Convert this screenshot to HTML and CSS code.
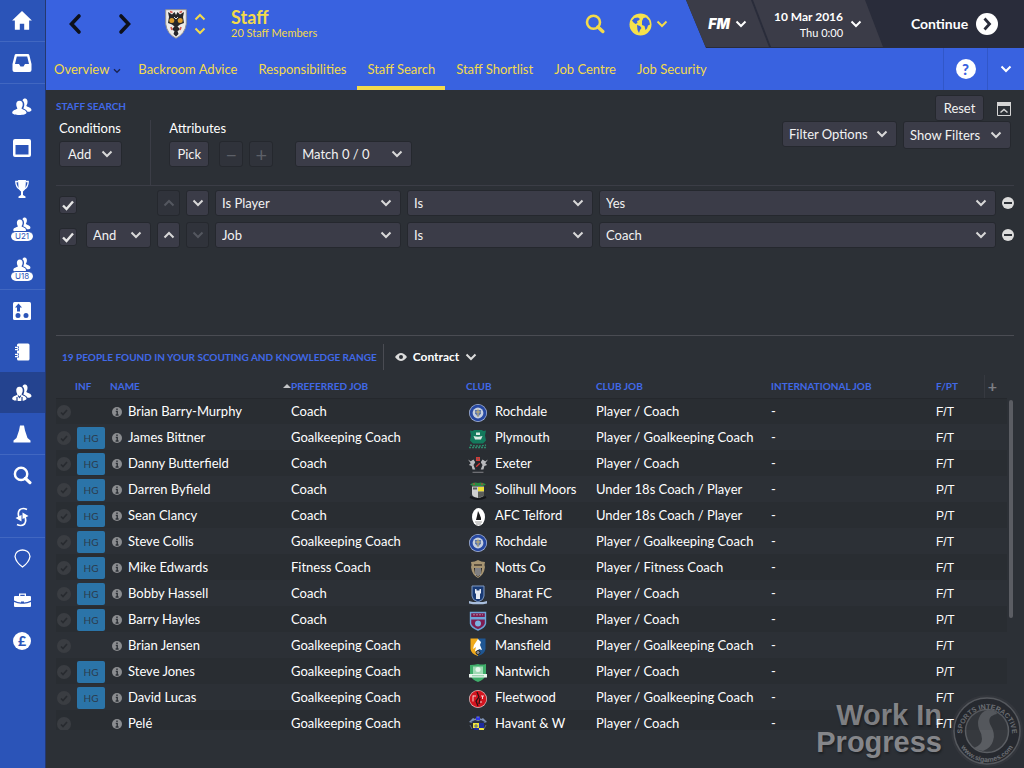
FILE: index.html
```
<!DOCTYPE html>
<html lang="en">
<head>
    <meta charset="UTF-8">
    <meta name="viewport" content="width=device-width, initial-scale=1.0">
    <title>Staff Search</title>
    <link rel="stylesheet" href="styles.css">
</head>
<body>
    <!-- shared icons and club badges -->
    <svg class="defs" aria-hidden="true">
        <symbol id="down" viewBox="0 0 12 8"><path d="M1.5 1.5 6 6l4.500-4.500" fill="none" stroke="currentColor" stroke-width="2"/></symbol>
        <symbol id="up" viewBox="0 0 12 8"><path d="M1.500 6.500 6 2l4.500 4.500" fill="none" stroke="currentColor" stroke-width="2"/></symbol>
        <symbol id="search" viewBox="0 0 20 20"><circle cx="8.500" cy="8.300" r="6.500" fill="none" stroke="currentColor" stroke-width="2.600"/><path d="m13 13 4.800 4.500" stroke="currentColor" stroke-width="3.400" stroke-linecap="round"/></symbol>
        <symbol id="people" viewBox="0 0 20 18"><path fill="currentColor" d="M10.500 2.500C11 .8 12.300.3 13.300.5c2 .4 2.600 2.500 2.100 4.700-.3 1.300-.9 2-1.100 2.800 1 .9 5.200 1.500 5.200 4 0 1.400-2 1.900-4 1.700-1-1.700-2.600-2.600-4.200-3.200 1.200-2.600 1.700-5.900-.8-8z"/><path fill="currentColor" d="M7.500 2.800c2.400 0 3.600 2 3.200 4.500-.3 1.600-.9 2.300-1.200 3.200 1 1.400 5 1.500 5 4.300 0 1.500-3.500 2.200-7.200 2.200S.2 16.300.2 14.800c0-2.800 4.200-2.900 5.200-4.300-.3-.9-.9-1.600-1.100-3.200-.4-2.500.8-4.500 3.200-4.500z"/></symbol>
        <symbol id="info" viewBox="0 0 10 10"><circle cx="5" cy="5" r="5" fill="#8b8d90"/><path d="M5 1.500v1.500M3.800 4.400h1.400V8M3.600 8h3" stroke="#2c3036" stroke-width="1.400" fill="none"/></symbol>
        <symbol id="minus" viewBox="0 0 12 12"><circle cx="6" cy="6" r="6" fill="#dcdcdc"/><path d="M2 6h8" stroke="#2c3036" stroke-width="2"/></symbol>

        <symbol id="rochdale" viewBox="0 0 20 20"><circle cx="10" cy="10" r="9" fill="#a9b8dc"/><circle cx="10" cy="10" r="8.300" fill="#2748a0"/><circle cx="10" cy="10" r="5.400" fill="#c5cede"/><path d="M7 7h6v3.500L10 14l-3-3.500z" fill="#5675b3"/><path d="M10 6v8M7.500 9h5" stroke="#c9b26a"/></symbol>
        <symbol id="plymouth" viewBox="0 0 20 20"><path d="M2 1.500q3 1 4-.5h8q1 1.500 4 .5l-1 5 1 5-3 3H5l-3-3 1-5z" fill="#14795c"/><path d="M5.500 7q4.500 1.500 9 0l-1.500 3.500H7zM8 3.500h4V6H8z" fill="#dcebe4"/><path d="M2 16q8 2 16 0M1 18.500h18" stroke="#2d8a6c" stroke-width="1.300" fill="none" stroke-dasharray="2 1"/></symbol>
        <symbol id="exeter" viewBox="0 0 22 18"><path d="M0 3l3 2 3-2 2 3-2 3 2 5H5l-1-4-3-1 2-2zM22 3l-3 2-3-2-2 3 2 3-2 5h3l1-4 3-1-2-2z" fill="#b9babd"/><path d="M8 5h6v6l-3 4-3-4z" fill="#24262b"/><path d="M9 11l4-4M9.500 1h3v3h-3z" stroke="#d23b38" stroke-width="1.400" fill="#666"/><path d="M5 17h12" stroke="#8c8c8f"/></symbol>
        <symbol id="solihull" viewBox="0 0 20 20"><path d="M2 3.500q4-3 8-1.500 4-1.500 8 1.500l-3 1.500H5z" fill="#2b8a42"/><path d="M4 5.500h12V13q0 3-6 4-6-1-6-4z" fill="#cfcfcf"/><path d="M10 6h6v4.500h-6z" fill="#ecdf36"/><path d="M10 10.500h6V15l-6 2zM5 6.500h4v2H5z" fill="#5a5c58"/><path d="M2 16q8 4 16 0" stroke="#15171b" stroke-width="2" fill="none"/><path d="M5 3h2M13 3h2" stroke="#c94136"/></symbol>
        <symbol id="telford" viewBox="0 0 20 20"><ellipse cx="10.500" cy="10" rx="6.500" ry="9" fill="#fff"/><path d="M10 4l1.500 3L13 11v2H8l1-4z" fill="#1b1b1d"/><path d="M7 15h7M8 17h5" stroke="#999"/></symbol>
        <symbol id="notts" viewBox="0 0 20 20"><path d="M3 3q4 0 7-2 3 2 7 2-1 3 0 5-1 8-7 11Q4 16 3 8q1-2 0-5z" fill="#a79572"/><path d="M6 9h8l-1 6-3 3-3-3z" fill="#202124"/><path d="M8 9v7M10 9v8M12 9v7" stroke="#ddd"/><path d="M6 5h8v2H6z" fill="#5b5040"/></symbol>
        <symbol id="bharat" viewBox="0 0 20 20"><path d="M4 1h12v10q0 4-6 6-6-2-6-6z" fill="#1a3b75" stroke="#7f99c2"/><path d="M7 4h1.500v1.500h3V4H13v4l-1 1v5H8V9L7 8z" fill="#e6eaf2"/><path d="M1 16l4 1h10l4-1v2.500l-4 .8H5l-4-.8z" fill="#a9bedc"/></symbol>
        <symbol id="chesham" viewBox="0 0 20 20"><path d="M2.500 1.500h15v11q-1 4-7.500 6.500-6.500-2.500-7.500-6.500z" fill="#7d1c50" stroke="#6ea3d8" stroke-width="1.400"/><path d="M3 6h14v2.500H3z" fill="#6ea3d8"/><circle cx="10" cy="12.500" r="3" fill="#7db1e2"/><path d="M5 3.800h10" stroke="#b7809c" stroke-dasharray="2 1"/></symbol>
        <symbol id="mansfield" viewBox="0 0 20 20"><path d="M2.500 1.500H10V19Q3 17 2.500 12z" fill="#f0aa1c"/><path d="M10 1.500h7.500V12q-.5 5-7.500 7z" fill="#1f5693"/><path d="M10 2l3 3-1 3 2 5-3-1-2 3-2-1 1-4-3 2 1-4z" fill="#fff"/><circle cx="10" cy="15.500" r="2" fill="#8b8f95" stroke="#252525"/></symbol>
        <symbol id="nantwich" viewBox="0 0 20 20"><path d="M2 2q4 0 8-1 4 1 8 0v11q-2 5-8 7-6-2-8-7z" fill="#3fae6a"/><path d="M5 3.500h10V11H5z" fill="#9fdab4"/><circle cx="10" cy="6.500" r="2.500" fill="#e6f6ec"/><path d="M1 11h18v3.500H1z" fill="#e9f5ed"/><path d="M4 12.800h12" stroke="#7cc79a"/></symbol>
        <symbol id="fleetwood" viewBox="0 0 20 20"><circle cx="10" cy="10" r="9" fill="#e5b9bb"/><circle cx="10" cy="10" r="8.300" fill="#d3141f"/><path d="M5 6.500v6M5 7h3M13 7h3M14.500 7v3M14 13h-2.500" stroke="#f3cfd0" fill="none"/><path d="M9 3l2 5-3 4 2 5M12 9l-1 6" stroke="#2a1214" stroke-width="1.300" fill="none"/></symbol>
        <symbol id="havant" viewBox="0 0 20 20"><path d="M1 7l4-4 2 1 3-3 3 3 2-1 4 4-3 1H4z" fill="#7d90b4"/><path d="M3 7l4-2 3 1 3-1 4 2-3 2H6z" fill="#26304a"/><path d="M8 1l2 2 2-2v4H8z" fill="#2d35e7"/><path d="M5 8h6v5H5zM11 13h5v4h-5z" fill="#efe53a"/><path d="M11 8h5v5h-5zM5 13h6v4l-2 1z" fill="#1d2a9e"/><path d="M2 10l2 4M18 10l-2 4M7 10h2v2H7z" stroke="#5a677d" fill="none"/></symbol>
    </svg>

    <nav class="sidebar" aria-label="Main">
        <div class="group">
            <a href="#home" aria-label="Home"><svg width="22" height="22" viewBox="0 0 20 20"><path fill="currentColor" d="M10 1 1 9.500h2.500V18H8v-5.500h4V18h4.500V9.500H19z"/></svg></a>
        </div>
        <div class="group">
            <a href="#inbox" aria-label="Inbox"><svg width="20" height="18" viewBox="0 0 20 18"><path fill="currentColor" fill-rule="evenodd" d="M4 0h12q1 0 1.300 1L19.500 10v6q0 2-2 2h-15q-2 0-2-2v-6L2.700 1Q3 0 4 0zm.8 2.500L3 10h4l1.500 2.500h3L13 10h4l-1.800-7.500z"/></svg></a>
        </div>
        <div class="group team">
            <a href="#squad" aria-label="Squad"><svg width="20" height="18"><use href="#people"/></svg></a>
            <a href="#calendar" aria-label="Calendar"><svg width="18" height="18" viewBox="0 0 18 18"><path fill="currentColor" fill-rule="evenodd" d="M2 0h14q2 0 2 2v14q0 2-2 2H2q-2 0-2-2V2q0-2 2-2zm.5 6v9.500h13V6z"/></svg></a>
            <a href="#trophies" aria-label="Competitions"><svg width="14" height="18" viewBox="0 0 14 18"><path fill="currentColor" d="M3 0h8l-.5 7Q10 10.500 8 11.500v3.500l2.500 1.500V18h-7v-1.500L6 15v-3.500Q4 10.500 3.500 7z"/><path d="M3 1.500H.8q0 6 4.500 8M11 1.500h2.200q0 6-4.500 8" fill="none" stroke="currentColor" stroke-width="1.300"/></svg></a>
            <a href="#u21" aria-label="Under 21s" class="youth"><svg width="18" height="16"><use href="#people"/></svg><span>U21</span></a>
            <a href="#u18" aria-label="Under 18s" class="youth"><svg width="18" height="16"><use href="#people"/></svg><span>U18</span></a>
        </div>
        <div class="group">
            <a href="#tactics" aria-label="Tactics"><svg width="18" height="18" viewBox="0 0 18 18"><rect width="18" height="18" rx="1.500" fill="currentColor"/><path d="M5.500 1.500 9 5.500H7v4H4v-4H2zM5 11a2.500 2.500 0 1 1 0 5 2.500 2.500 0 0 1 0-5zm8 0a2.500 2.500 0 1 1 0 5 2.500 2.500 0 0 1 0-5z" fill="#2b54b8"/></svg></a>
            <a href="#notes" aria-label="Team report"><svg width="16" height="18" viewBox="0 0 16 18"><path fill="currentColor" d="M3 2q0-1.500 1.500-1.500H14q1.500 0 1.500 1.500v14q0 1.500-1.500 1.500H4.500Q3 17.500 3 16z"/><g fill="none"><path d="M2 5.500h3M2 12.500h3" stroke="#2b54b8" stroke-width="4"/><path d="M1 4.300h2.500q1.200 1.200 0 2.400H1M1 11.300h2.500q1.200 1.200 0 2.400H1" stroke="currentColor" stroke-width="1.200"/></g></svg></a>
            <a href="#staff" aria-label="Staff" aria-current="page"><svg width="20" height="20" viewBox="0 0 20 18"><use href="#people" width="20" height="18"/><path d="m6 11.500 1.500 2L9 11.500M5 13v4M10 13v4" stroke="#24438f" fill="none" stroke-width="1.200"/></svg></a>
            <a href="#training" aria-label="Training"><svg width="18" height="18" viewBox="0 0 18 18"><path fill="currentColor" d="M7 .5h4l1 5 2.500 7.500 3 2.500v2H.5v-2l3-2.500L6 5.500z"/></svg></a>
        </div>
        <div class="group">
            <a href="#search" aria-label="Scouting"><svg width="19" height="19"><use href="#search"/></svg></a>
            <a href="#transfers" aria-label="Transfers"><svg width="14" height="20" viewBox="0 0 14 20"><g fill="none" stroke="currentColor" stroke-width="1.700"><path d="M12 2.500Q7.500.3 4.500 3q-2.300 3-.2 8M2 17.500q4.500 2.200 7.500-.5 2.300-3 .2-8"/></g><path fill="currentColor" d="M.5 11 6.500 8v6.500zM13.500 9l-6 3V5.500z"/></svg></a>
        </div>
        <div class="group">
            <a href="#club" aria-label="Club"><svg width="17" height="19" viewBox="0 0 17 19"><path d="M3.500 2.500Q8.500-.5 13.500 2.500q2.500 2 2.500 5-1 6-7.500 10.500Q2 13.500 1 7.500q0-3 2.500-5z" fill="none" stroke="currentColor" stroke-width="1.300"/></svg></a>
            <a href="#board" aria-label="Job"><svg width="17" height="14" viewBox="0 0 17 14"><path fill="currentColor" fill-rule="evenodd" d="M5 3V.5h7V3h4q1 0 1 1v3.500q-4 2-7 2V8.500H7v1q-3 0-7-2V4q0-1 1-1zm1.300 0h4.400V1.800H6.300zM0 9q4 1.800 7 1.800h3q3 0 7-1.800v4q0 1-1 1H1q-1 0-1-1z"/></svg></a>
            <a href="#finances" aria-label="Finances" class="pound"><span>£</span></a>
        </div>
    </nav>

    <div class="page">
        <header>
            <div class="titlebar">
                <button class="nav-arrow" aria-label="Back"><svg width="14" height="22" viewBox="0 0 14 22"><path d="M11 3 3.500 11l7.500 8" fill="none" stroke="#0d101b" stroke-width="3.600" stroke-linecap="round"/></svg></button>
                <button class="nav-arrow" aria-label="Forward"><svg width="14" height="22" viewBox="0 0 14 22"><path d="m3 3 7.500 8L3 19" fill="none" stroke="#0d101b" stroke-width="3.600" stroke-linecap="round"/></svg></button>
                <svg class="crest" width="22" height="30" viewBox="0 0 22 30"><path d="M.7.700h20.600V15Q20 25 11 29.300 2 25 .7 15z" fill="#eeece8" stroke="#8e8e93"/><path d="M3 3l4 2.500L9.500 3 11 6l1.500-3L15 5.500 19 3l-1 5 1 6-4 1.500-2.500 2 2 2v1.500l-2 1 1 3-2.500 2.500L8.500 25l1-3-2-1v-1.500l2-2-2.500-2L3 14l1-6z" fill="#26262a"/><circle cx="6.800" cy="11.500" r="2.500" fill="#d99b2f"/><circle cx="15.200" cy="11.500" r="2.500" fill="#d99b2f"/><path d="M5 2.500l2.500 1M17 2.500l-2.500 1M6 18l1 3M16 18l-1 3" stroke="#d4554c" stroke-width="1.600"/><path d="M9 8l2 2 2-2" stroke="#ddd" fill="none"/></svg>
                <div class="switcher">
                    <button aria-label="Previous club"><svg width="12" height="8"><use href="#up"/></svg></button>
                    <button aria-label="Next club"><svg width="12" height="8"><use href="#down"/></svg></button>
                </div>
                <div class="title">
                    <h1>Staff</h1>
                    <p>20 Staff Members</p>
                </div>
                <button class="find" aria-label="Search"><svg width="20" height="20"><use href="#search"/></svg></button>
                <button class="world" aria-label="World"><svg width="23" height="23" viewBox="0 0 23 23"><circle cx="11.500" cy="11.500" r="11" fill="#f6e14b"/><path d="M3 7.500 5.500 5 9 4.500 11 6 9.500 7.500 8 8 8.500 10 6.500 11 4.500 9.500zM8 12l3 1 1.500 2-1.500 2-1 3-1.500-3zM13 8l1.500-3L17 4.500l3 3 1 4-2 1-1 3-1.500 1.500-1-4L13 12z" fill="#3962e0"/></svg><svg width="12" height="8"><use href="#down"/></svg></button>
                <div class="control-panel">
                    <button class="slant fm"><i>FM</i><svg width="12" height="8"><use href="#down"/></svg></button>
                    <button class="slant date"><span><b>10 Mar 2016</b>Thu 0:00</span><svg width="12" height="8"><use href="#down"/></svg></button>
                    <button class="continue">Continue <svg width="22" height="22" viewBox="0 0 22 22"><circle cx="11" cy="11" r="11" fill="#fff"/><path d="m8.500 5.500 5 5.500-5 5.500" fill="none" stroke="#292c3a" stroke-width="2.800"/></svg></button>
                </div>
            </div>
            <nav class="tabs" aria-label="Staff">
                <a href="#overview">Overview <svg width="8" height="6"><use href="#down"/></svg></a>
                <a href="#backroom">Backroom Advice</a>
                <a href="#responsibilities">Responsibilities</a>
                <a href="#staff-search" aria-current="page">Staff Search</a>
                <a href="#shortlist">Staff Shortlist</a>
                <a href="#job-centre">Job Centre</a>
                <a href="#job-security">Job Security</a>
                <button class="help" aria-label="Help"><b>?</b></button>
                <button class="more" aria-label="More"><svg width="12" height="8"><use href="#down"/></svg></button>
            </nav>
        </header>

        <main>
            <section class="filters">
                <div class="filter-left">
                    <h2>STAFF SEARCH</h2>
                    <div class="filter-groups">
                        <div class="filter-group">
                            <h3>Conditions</h3>
                            <button class="btn">Add <svg width="12" height="8"><use href="#down"/></svg></button>
                        </div>
                        <div class="filter-group attributes">
                            <h3>Attributes</h3>
                            <div class="buttons">
                                <button class="btn pick">Pick</button>
                                <button class="btn step" disabled>−</button>
                                <button class="btn step" disabled>+</button>
                                <select class="match" aria-label="Match"><option>Match 0 / 0</option></select>
                            </div>
                        </div>
                    </div>
                </div>
                <div class="filter-right">
                    <div class="filter-top">
                        <button class="btn reset">Reset</button>
                        <button class="collapse" aria-label="Collapse"><svg width="14" height="14" viewBox="0 0 14 14"><path d="M.5.500h13v13H.5z" fill="none" stroke="#d5d5d5"/><path d="M0 0h14v4H0z" fill="#d5d5d5"/><path d="m3.500 10.500 3.500-3 3.500 3" fill="none" stroke="#d5d5d5" stroke-width="1.500"/></svg></button>
                    </div>
                    <div class="filter-bottom">
                        <button class="btn options">Filter Options <svg width="12" height="8"><use href="#down"/></svg></button>
                        <button class="btn show">Show Filters <svg width="12" height="8"><use href="#down"/></svg></button>
                    </div>
                </div>
            </section>

            <section class="conditions">
                <div class="condition">
                    <input type="checkbox" class="check" checked aria-label="Use condition 1">
                    <span class="joiner"></span>
                    <button class="btn move" disabled aria-label="Move up"><svg width="12" height="8"><use href="#up"/></svg></button>
                    <button class="btn move" aria-label="Move down"><svg width="12" height="8"><use href="#down"/></svg></button>
                    <select class="field" aria-label="Field"><option>Is Player</option></select>
                    <select class="field" aria-label="Operator"><option>Is</option></select>
                    <select class="value" aria-label="Value"><option>Yes</option></select>
                    <button class="remove" aria-label="Remove"><svg width="12" height="12"><use href="#minus"/></svg></button>
                </div>
                <div class="condition">
                    <input type="checkbox" class="check" checked aria-label="Use condition 2">
                    <select class="joiner" aria-label="Join"><option>And</option></select>
                    <button class="btn move" aria-label="Move up"><svg width="12" height="8"><use href="#up"/></svg></button>
                    <button class="btn move" disabled aria-label="Move down"><svg width="12" height="8"><use href="#down"/></svg></button>
                    <select class="field" aria-label="Field"><option>Job</option></select>
                    <select class="field" aria-label="Operator"><option>Is</option></select>
                    <select class="value" aria-label="Value"><option>Coach</option></select>
                    <button class="remove" aria-label="Remove"><svg width="12" height="12"><use href="#minus"/></svg></button>
                </div>
            </section>

            <section class="results">
                <div class="results-bar">
                    <h2>19 PEOPLE FOUND IN YOUR SCOUTING AND KNOWLEDGE RANGE</h2>
                    <button class="view"><svg width="12" height="8" viewBox="0 0 12 8"><path d="M0 4q3-4 6-4t6 4q-3 4-6 4T0 4z" fill="#dcdcdc"/><circle cx="6" cy="4" r="2" fill="#2c3036"/></svg>Contract <svg width="12" height="8"><use href="#down"/></svg></button>
                </div>
                <div class="scroller">
                    <table>
                        <thead>
                            <tr>
                                <th class="pick-col"></th>
                                <th class="inf-col">INF</th>
                                <th class="name-col"><span class="sorted">NAME</span></th>
                                <th class="job-col">PREFERRED JOB</th>
                                <th class="club-col">CLUB</th>
                                <th class="clubjob-col">CLUB JOB</th>
                                <th class="int-col">INTERNATIONAL JOB</th>
                                <th class="time-col">F/PT</th>
                                <th class="add-col"><button aria-label="Add column">+</button></th>
                            </tr>
                        </thead>
                        <tbody>
                            <tr>
                                <td><input type="checkbox" class="pick-row" aria-label="Select Brian Barry-Murphy"></td>
                                <td></td>
                                <td><svg class="info"><use href="#info"/></svg>Brian Barry-Murphy</td>
                                <td>Coach</td>
                                <td><svg class="badge"><use href="#rochdale"/></svg>Rochdale</td>
                                <td>Player / Coach</td>
                                <td>-</td>
                                <td class="time">F/T</td>
                                <td></td>
                            </tr>
                            <tr>
                                <td><input type="checkbox" class="pick-row" aria-label="Select James Bittner"></td>
                                <td><span class="hg">HG</span></td>
                                <td><svg class="info"><use href="#info"/></svg>James Bittner</td>
                                <td>Goalkeeping Coach</td>
                                <td><svg class="badge"><use href="#plymouth"/></svg>Plymouth</td>
                                <td>Player / Goalkeeping Coach</td>
                                <td>-</td>
                                <td class="time">F/T</td>
                                <td></td>
                            </tr>
                            <tr>
                                <td><input type="checkbox" class="pick-row" aria-label="Select Danny Butterfield"></td>
                                <td><span class="hg">HG</span></td>
                                <td><svg class="info"><use href="#info"/></svg>Danny Butterfield</td>
                                <td>Coach</td>
                                <td><svg class="badge"><use href="#exeter"/></svg>Exeter</td>
                                <td>Player / Coach</td>
                                <td>-</td>
                                <td class="time">F/T</td>
                                <td></td>
                            </tr>
                            <tr>
                                <td><input type="checkbox" class="pick-row" aria-label="Select Darren Byfield"></td>
                                <td><span class="hg">HG</span></td>
                                <td><svg class="info"><use href="#info"/></svg>Darren Byfield</td>
                                <td>Coach</td>
                                <td><svg class="badge"><use href="#solihull"/></svg>Solihull Moors</td>
                                <td>Under 18s Coach / Player</td>
                                <td>-</td>
                                <td class="time">P/T</td>
                                <td></td>
                            </tr>
                            <tr>
                                <td><input type="checkbox" class="pick-row" aria-label="Select Sean Clancy"></td>
                                <td><span class="hg">HG</span></td>
                                <td><svg class="info"><use href="#info"/></svg>Sean Clancy</td>
                                <td>Coach</td>
                                <td><svg class="badge"><use href="#telford"/></svg>AFC Telford</td>
                                <td>Under 18s Coach / Player</td>
                                <td>-</td>
                                <td class="time">P/T</td>
                                <td></td>
                            </tr>
                            <tr>
                                <td><input type="checkbox" class="pick-row" aria-label="Select Steve Collis"></td>
                                <td><span class="hg">HG</span></td>
                                <td><svg class="info"><use href="#info"/></svg>Steve Collis</td>
                                <td>Goalkeeping Coach</td>
                                <td><svg class="badge"><use href="#rochdale"/></svg>Rochdale</td>
                                <td>Player / Goalkeeping Coach</td>
                                <td>-</td>
                                <td class="time">F/T</td>
                                <td></td>
                            </tr>
                            <tr>
                                <td><input type="checkbox" class="pick-row" aria-label="Select Mike Edwards"></td>
                                <td><span class="hg">HG</span></td>
                                <td><svg class="info"><use href="#info"/></svg>Mike Edwards</td>
                                <td>Fitness Coach</td>
                                <td><svg class="badge"><use href="#notts"/></svg>Notts Co</td>
                                <td>Player / Fitness Coach</td>
                                <td>-</td>
                                <td class="time">F/T</td>
                                <td></td>
                            </tr>
                            <tr>
                                <td><input type="checkbox" class="pick-row" aria-label="Select Bobby Hassell"></td>
                                <td><span class="hg">HG</span></td>
                                <td><svg class="info"><use href="#info"/></svg>Bobby Hassell</td>
                                <td>Coach</td>
                                <td><svg class="badge"><use href="#bharat"/></svg>Bharat FC</td>
                                <td>Player / Coach</td>
                                <td>-</td>
                                <td class="time">F/T</td>
                                <td></td>
                            </tr>
                            <tr>
                                <td><input type="checkbox" class="pick-row" aria-label="Select Barry Hayles"></td>
                                <td><span class="hg">HG</span></td>
                                <td><svg class="info"><use href="#info"/></svg>Barry Hayles</td>
                                <td>Coach</td>
                                <td><svg class="badge"><use href="#chesham"/></svg>Chesham</td>
                                <td>Player / Coach</td>
                                <td>-</td>
                                <td class="time">P/T</td>
                                <td></td>
                            </tr>
                            <tr>
                                <td><input type="checkbox" class="pick-row" aria-label="Select Brian Jensen"></td>
                                <td></td>
                                <td><svg class="info"><use href="#info"/></svg>Brian Jensen</td>
                                <td>Goalkeeping Coach</td>
                                <td><svg class="badge"><use href="#mansfield"/></svg>Mansfield</td>
                                <td>Player / Goalkeeping Coach</td>
                                <td>-</td>
                                <td class="time">F/T</td>
                                <td></td>
                            </tr>
                            <tr>
                                <td><input type="checkbox" class="pick-row" aria-label="Select Steve Jones"></td>
                                <td><span class="hg">HG</span></td>
                                <td><svg class="info"><use href="#info"/></svg>Steve Jones</td>
                                <td>Goalkeeping Coach</td>
                                <td><svg class="badge"><use href="#nantwich"/></svg>Nantwich</td>
                                <td>Player / Coach</td>
                                <td>-</td>
                                <td class="time">P/T</td>
                                <td></td>
                            </tr>
                            <tr>
                                <td><input type="checkbox" class="pick-row" aria-label="Select David Lucas"></td>
                                <td><span class="hg">HG</span></td>
                                <td><svg class="info"><use href="#info"/></svg>David Lucas</td>
                                <td>Goalkeeping Coach</td>
                                <td><svg class="badge"><use href="#fleetwood"/></svg>Fleetwood</td>
                                <td>Player / Goalkeeping Coach</td>
                                <td>-</td>
                                <td class="time">F/T</td>
                                <td></td>
                            </tr>
                            <tr>
                                <td><input type="checkbox" class="pick-row" aria-label="Select Pelé"></td>
                                <td></td>
                                <td><svg class="info"><use href="#info"/></svg>Pelé</td>
                                <td>Goalkeeping Coach</td>
                                <td><svg class="badge"><use href="#havant"/></svg>Havant &amp; W</td>
                                <td>Player / Coach</td>
                                <td>-</td>
                                <td class="time">F/T</td>
                                <td></td>
                            </tr>
                        </tbody>
                    </table>
                    <div class="scrollbar"></div>
                </div>
            </section>
        </main>

        <div class="watermark">
            <p>Work In<br>Progress</p>
            <svg width="74" height="74" viewBox="0 0 74 74">
                <circle cx="37" cy="37" r="36" fill="#33363c"/>
                <circle cx="37" cy="37" r="33" fill="#26292f" stroke="#55585d" stroke-width="1.500"/>
                <circle cx="37" cy="37" r="21.500" fill="#36393e" stroke="#5b5e63" stroke-width="1.500"/>
                <path d="M37 16q9 0 10 4-10 2-7 10 6 10 3 17-2 7-10 10-6-1-9-3 8-3 8-9 0-5-3-10-2-6 0-11 2-6 8-8z" fill="#5a5d62"/>
                <path id="arc-top" d="M12 40a25 25 0 1 1 50 0" fill="none"/>
                <path id="arc-bottom" d="M7 43a30.500 30.500 0 0 0 60 0" fill="none"/>
                <text class="ring" text-anchor="middle"><textPath href="#arc-top" startOffset="50%">SPORTS INTERACTIVE</textPath></text>
                <text class="ring" text-anchor="middle"><textPath href="#arc-bottom" startOffset="50%">www.sigames.com</textPath></text>
            </svg>
        </div>
    </div>
</body>
</html>
```
FILE: styles.css
```
* {
    box-sizing: border-box;
}

body {
    margin: 0;
    height: 100vh;
    display: flex;
    overflow: hidden;
    background-color: #2c3036;
    color: #fff;
    font-family: Lato, 'Open Sans', sans-serif;
    font-size: 13px;
    line-height: 16px;
}

h1, h2, h3, p {
    margin: 0;
}

button, select, input {
    font: inherit;
    color: inherit;
    margin: 0;
}

button {
    padding: 0;
    border: none;
    background: none;
    display: flex;
    align-items: center;
    justify-content: center;
    white-space: nowrap;
    cursor: pointer;
}

svg {
    flex: none;
}

.defs {
    position: absolute;
    width: 0;
    height: 0;
}

/* left sidebar */
.sidebar {
    flex: none;
    width: 46px;
    background-color: #2b54b8;
    border-right: 1px solid #24386f;
}

.group {
    border-bottom: 1px solid #4167c1;
}

.group:last-child {
    border-bottom: none;
}

.group a {
    height: 41px;
    padding-right: 1px;
    display: flex;
    align-items: center;
    justify-content: center;
    color: #fff;
    text-decoration: none;
}

.group a[aria-current] {
    background-color: #24438f;
}

.team {
    padding-top: 2px;
}

.team .youth {
    flex-direction: column;
    height: 40px;
}

.youth span {
    width: 22px;
    margin-top: -2px;
    border-top: 1px solid #2b54b8;
    border-radius: 5px;
    background-color: #fff;
    color: #2b54b8;
    font-family: Inter, sans-serif;
    font-size: 8px;
    line-height: 9px;
    text-align: center;
}

.pound span {
    width: 18px;
    border-radius: 50%;
    background-color: #fff;
    color: #2b54b8;
    font-weight: 900;
    font-size: 14px;
    line-height: 18px;
    text-align: center;
}

/* header */
.page {
    position: relative;
    flex: 1;
    min-width: 0;
    display: flex;
    flex-direction: column;
}

header {
    height: 90px;
    background-color: #3962e0;
    color: #f3da4b;
}

.titlebar {
    height: 48px;
    display: flex;
    align-items: center;
    padding-left: 12px;
}

.nav-arrow {
    width: 34px;
    height: 48px;
    margin-right: 16px;
}

.crest {
    margin-left: 7px;
}

.switcher {
    display: flex;
    flex-direction: column;
    gap: 6px;
    margin: 0 25px 0 7px;
}

.title {
    flex: 1;
}

h1 {
    font-size: 18px;
    line-height: 18px;
}

.title p {
    font-size: 11px;
    line-height: 14px;
}

.find {
    margin-right: 24px;
}

.world {
    gap: 4px;
    margin-right: 18px;
}

.control-panel {
    align-self: stretch;
    display: flex;
    background-color: #292c3a;
    color: #fff;
    clip-path: polygon(0 0, 100% 0, 100% 100%, 20px 100%);
}

.slant {
    background-color: #3b3c48;
    clip-path: polygon(0 0, calc(100% - 18px) 0, 100% 47px, 18px 47px);
}

.fm {
    width: 83px;
    gap: 5px;
}

.fm i {
    font-family: Inter, sans-serif;
    font-size: 14px;
    font-weight: 900;
}

.date {
    width: 130px;
    gap: 7px;
    margin-left: -16px;
}

.date span {
    font-size: 11px;
    line-height: 15px;
    text-align: right;
}

.date b {
    display: block;
    font-size: 12px;
    line-height: 17px;
}

.continue {
    width: 141px;
    gap: 8px;
    padding-left: 2px;
    font-size: 14px;
    font-weight: bold;
}

.tabs {
    height: 42px;
    display: flex;
    padding-left: 8px;
    gap: 21px;
}

.tabs a {
    display: flex;
    align-items: center;
    gap: 4px;
    height: 42px;
    color: inherit;
    text-decoration: none;
}

.tabs a svg {
    color: #1a2350;
    margin: 3px -4px 0 0;
}

.tabs a[aria-current] {
    margin: 0 -10px;
    padding: 4px 10px 0;
    border-bottom: 4px solid #f3da4b;
}

.help {
    width: 45px;
    margin-left: auto;
    border-left: 1px solid #3157c8;
    border-right: 1px solid #3157c8;
}

.help b {
    width: 20px;
    border-radius: 50%;
    background-color: #fff;
    color: #3962e0;
    font-weight: 900;
    font-size: 15px;
    line-height: 20px;
}

.more {
    width: 36px;
    margin-left: -21px;
    color: #fff;
}

/* search filters */
main {
    position: relative;
    z-index: 1;
    flex: 1;
    min-height: 0;
    display: flex;
    flex-direction: column;
    padding: 0 10px 38px;
}

h2 {
    color: #4169e8;
    font-size: 10px;
    line-height: 16px;
}

h3 {
    font-size: 13px;
    font-weight: normal;
}

.btn, select {
    height: 26px;
    border: 1px solid #25282e;
    border-radius: 3px;
    background-color: #3b3c48;
    color: #f2f2f2;
    padding: 0 8px;
}

.btn {
    gap: 10px;
}

.btn:disabled {
    background-color: #30333b;
    color: #5d6068;
}

.btn svg {
    color: #d8d8d8;
}

.btn:disabled svg {
    color: #54575f;
}

select {
    appearance: none;
    background-image: url("data:image/svg+xml,%3Csvg xmlns='http://www.w3.org/2000/svg' width='12' height='8'%3E%3Cpath d='M1.5 1.5 6 6l4.500-4.500' fill='none' stroke='%23d8d8d8' stroke-width='2'/%3E%3C/svg%3E");
    background-repeat: no-repeat;
    background-position: right 8px center;
    padding: 0 24px 0 6px;
}

.filters {
    display: flex;
    justify-content: space-between;
    height: 96px;
    border-bottom: 1px solid #3b3d46;
}

.filter-left {
    display: flex;
    flex-direction: column;
    padding-top: 8px;
}

.filter-groups {
    flex: 1;
    display: flex;
    margin-top: 6px;
}

.filter-group {
    padding-left: 3px;
}

.filter-group h3 {
    margin-bottom: 5px;
}

.attributes {
    margin-left: 28px;
    padding-left: 18px;
    border-left: 1px solid #3b3d46;
}

.buttons {
    display: flex;
    gap: 6px;
}

.pick {
    width: 40px;
    margin-right: 4px;
}

.step {
    width: 24px;
    padding: 0;
    font-size: 20px;
}

.match {
    width: 117px;
    margin-left: 16px;
}

.filter-right {
    padding-right: 3px;
}

.filter-top {
    display: flex;
    justify-content: flex-end;
    gap: 13px;
    padding-top: 5px;
}

.reset {
    width: 49px;
}

.collapse {
    align-items: flex-end;
    padding-bottom: 5px;
}

.filter-bottom {
    display: flex;
    gap: 6px;
}

.options, .show {
    justify-content: space-between;
    gap: 4px;
    padding: 0 8px 0 6px;
}

.options {
    width: 115px;
}

.show {
    width: 108px;
    height: 28px;
}

.conditions {
    flex: none;
    display: flex;
    flex-direction: column;
    gap: 6px;
    height: 150px;
    padding: 4px 0 0 3px;
    border-bottom: 1px solid #4a4c53;
}

.condition {
    display: flex;
    align-items: center;
    gap: 6px;
}

.check {
    appearance: none;
    width: 18px;
    height: 18px;
    margin: 3px 3px 0 0;
    border: 1px solid #25282e;
    border-radius: 3px;
    background: #3b3c48 url("data:image/svg+xml,%3Csvg xmlns='http://www.w3.org/2000/svg' width='14' height='14'%3E%3Cpath d='M2 7.500 5.500 11 12 3.500' fill='none' stroke='%23e6e6e6' stroke-width='2.400'/%3E%3C/svg%3E") center no-repeat;
}

.joiner {
    width: 65px;
}

.move {
    width: 23px;
    padding: 0;
}

.field {
    width: 186px;
}

.value {
    flex: 1;
}

.remove {
    width: 12px;
}

/* results */
.results {
    flex: 1;
    min-height: 0;
    display: flex;
    flex-direction: column;
}

.results-bar {
    display: flex;
    align-items: center;
    height: 39px;
    padding: 2px 0 0 6px;
}

.view {
    height: 26px;
    gap: 6px;
    margin-left: 6px;
    padding-left: 11px;
    border-left: 1px solid #4a4c53;
    font-weight: bold;
    font-size: 12px;
}

.view svg {
    color: #dcdcdc;
}

.scroller {
    flex: 1;
    min-height: 0;
    display: flex;
    overflow: hidden;
}

table {
    flex: 1;
    height: max-content;
    border-collapse: collapse;
    table-layout: fixed;
}

th {
    height: 23px;
    padding: 0;
    border-bottom: 1px solid #25282d;
    color: #4169e8;
    font-size: 10px;
    font-weight: bold;
    text-align: left;
}

.pick-col { width: 19px; }
.inf-col { width: 35px; }
.name-col { width: 181px; }
.job-col { width: 175px; }
.club-col { width: 130px; }
.clubjob-col { width: 175px; }
.int-col { width: 165px; }
.time-col { width: 48px; }

.sorted {
    display: flex;
    align-items: center;
    justify-content: space-between;
}

.sorted::after {
    content: '';
    border: 4px solid transparent;
    border-top: none;
    border-bottom-color: #c4c5c8;
}

.add-col {
    border-left: 1px solid #363940;
}

.add-col button {
    width: 16px;
    color: #7c7e84;
    font-size: 16px;
}

td {
    height: 26px;
    padding: 0 0 1px;
    white-space: nowrap;
}

tbody tr:nth-child(odd) {
    background-color: rgba(0, 0, 0, 0.06);
}

.pick-row {
    appearance: none;
    display: block;
    width: 14px;
    height: 14px;
    margin: 3px 0 0 1px;
    border-radius: 50%;
    background: #3a3d42 url("data:image/svg+xml,%3Csvg xmlns='http://www.w3.org/2000/svg' width='14' height='14'%3E%3Cpath d='M4 7.500 6 9.500 10 5' fill='none' stroke='%23282b30' stroke-width='1.700'/%3E%3C/svg%3E") center no-repeat;
}

.hg {
    display: block;
    width: 28px;
    margin: 3px 0 0 2px;
    border-radius: 2px;
    background-color: #2b74a8;
    color: #2c3b4c;
    font-size: 10px;
    line-height: 22px;
    text-align: center;
}

.info {
    width: 10px;
    height: 10px;
    margin: 0 6px 0 2px;
    vertical-align: -1px;
}

.badge {
    width: 20px;
    height: 20px;
    margin: -4px 7px -4px 2px;
    vertical-align: -3px;
}

.time {
    padding-top: 3px;
    font-family: 'Liberation Sans', sans-serif;
    font-size: 12px;
}

.scrollbar {
    width: 4px;
    height: 218px;
    margin: 25px 1px 0 2px;
    border-radius: 2px;
    background-color: #5b5d63;
}

/* bottom right stamp, behind the table text */
.watermark {
    position: absolute;
    right: 0;
    bottom: 0;
    display: flex;
    align-items: center;
    gap: 8px;
}

.watermark p {
    padding-bottom: 4px;
    color: #85868a;
    font-family: 'Liberation Sans', sans-serif;
    font-size: 29px;
    font-weight: bold;
    line-height: 27px;
    text-align: right;
    text-shadow: 1px 2px 2px #1d2024;
}

.ring {
    fill: #6d7075;
    font-family: 'Liberation Sans', sans-serif;
    font-size: 7px;
    font-weight: bold;
}
```
